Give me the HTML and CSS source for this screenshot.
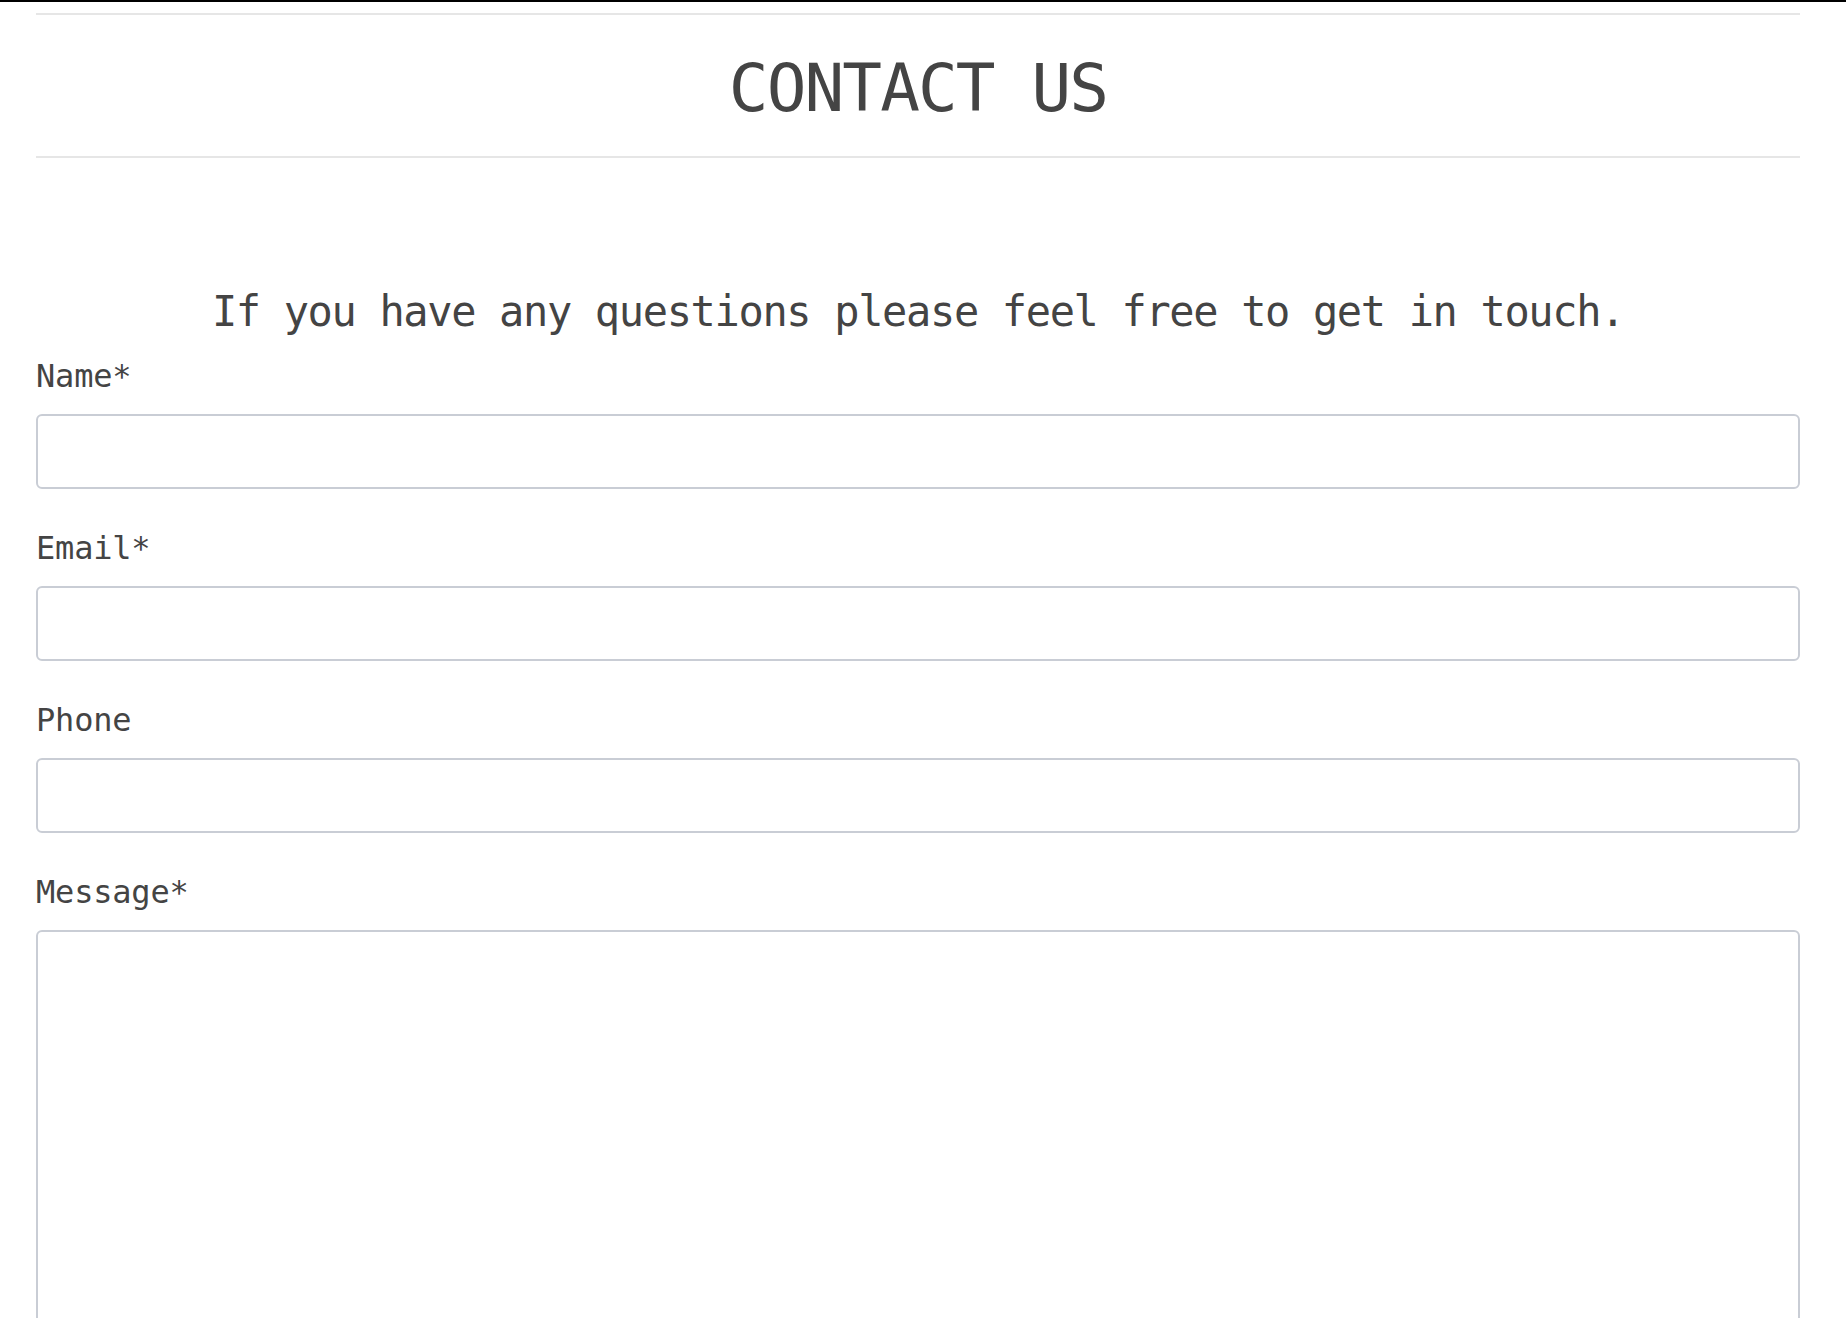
FILE: index.html
```html
<!DOCTYPE html>
<html lang="en">
<head>
<meta charset="utf-8">
<title>Contact Us</title>
<link rel="stylesheet" href="styles.css">
</head>
<body>
<div class="page">
  <div class="rule"></div>
  <h1 class="title">CONTACT US</h1>
  <div class="rule rule-bottom"></div>
  <p class="intro">If you have any questions please feel free to get in touch.</p>
  <form class="form">
    <div class="field">
      <label class="label" for="name">Name*</label>
      <input class="input" id="name" type="text">
    </div>
    <div class="field">
      <label class="label" for="email">Email*</label>
      <input class="input" id="email" type="email">
    </div>
    <div class="field">
      <label class="label" for="phone">Phone</label>
      <input class="input" id="phone" type="tel">
    </div>
    <div class="field">
      <label class="label" for="message">Message*</label>
      <textarea class="input textarea" id="message"></textarea>
    </div>
  </form>
</div>
</body>
</html>
```

FILE: styles.css
```css
html, body {
  margin: 0;
  padding: 0;
  background: #ffffff;
}

body {
  border-top: 2px solid #000000;
  font-family: "DejaVu Sans Mono", "Liberation Mono", monospace;
  color: #444444;
  overflow: hidden;
}

.page {
  width: 1764px;
  margin-left: 36px;
  padding-top: 11px;
}

.rule {
  height: 2px;
  background: #e6e6e6;
}

.title {
  margin: 34px 0 27px;
  font-size: 66px;
  line-height: 80px;
  font-weight: normal;
  letter-spacing: -1.9px;
  text-align: center;
  color: #444444;
}

.intro {
  margin: 129px 0 0;
  font-size: 42px;
  line-height: 50px;
  letter-spacing: -1.35px;
  text-align: center;
}

.form {
  display: flex;
  flex-direction: column;
  gap: 41px;
  margin-top: 21px;
}

.field {
  display: flex;
  flex-direction: column;
  gap: 20px;
}

.label {
  font-size: 32px;
  line-height: 36px;
  letter-spacing: -0.2px;
  color: #444444;
}

.input {
  box-sizing: border-box;
  width: 100%;
  height: 75px;
  margin: 0;
  border: 2px solid #c9cdd5;
  border-radius: 6px;
  background: #ffffff;
  font-family: inherit;
  font-size: 24px;
  padding: 0 16px;
  outline: none;
}

.textarea {
  height: 460px;
  resize: none;
  padding: 16px;
}
```
